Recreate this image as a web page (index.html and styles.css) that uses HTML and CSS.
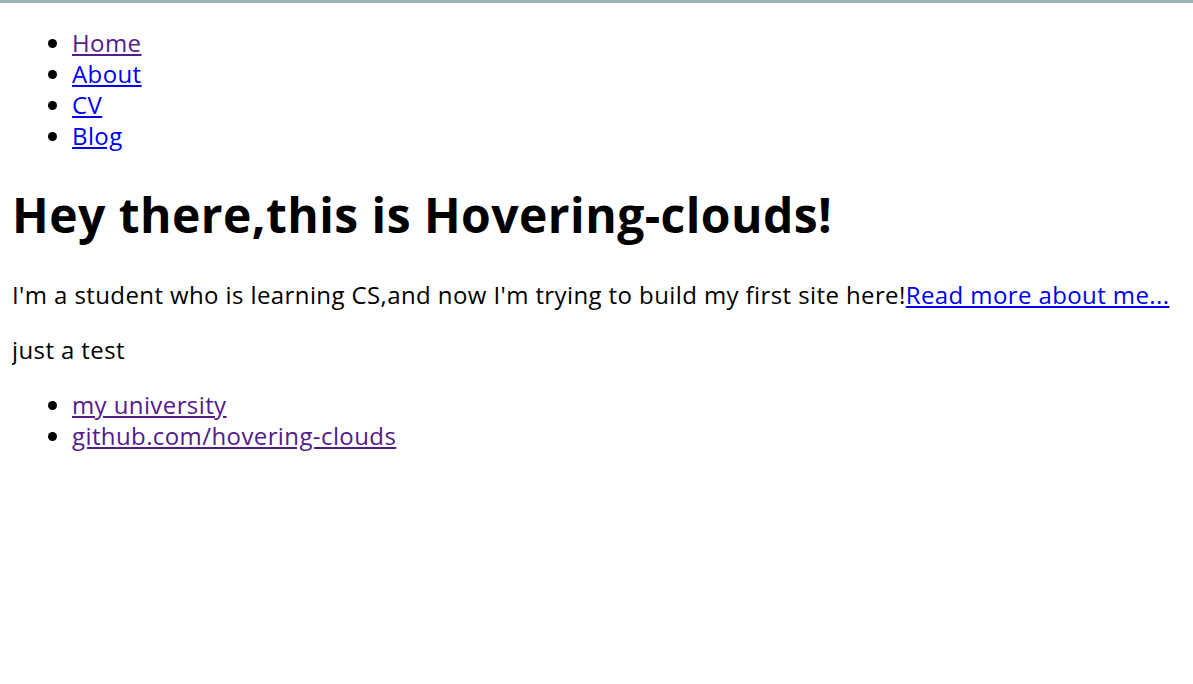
FILE: index.html
```html
<!DOCTYPE html>
<html lang="en">
<head>
<meta charset="utf-8">
<title>Hovering-clouds</title>
<link rel="stylesheet" href="styles.css">
</head>
<body class="page">
<ul class="nav">
  <li><a class="visited" href="#">Home</a></li>
  <li><a href="#">About</a></li>
  <li><a href="#">CV</a></li>
  <li><a href="#">Blog</a></li>
</ul>
<h1 class="title">Hey there,this is Hovering-clouds!</h1>
<p class="intro">I'm a student who is learning CS,and now I'm trying to build my first site here!<a href="#">Read more about me...</a></p>
<p class="intro">just a test</p>
<ul class="links">
  <li><a class="visited" href="#">my university</a></li>
  <li><a class="visited" href="#">github.com/hovering-clouds</a></li>
</ul>
</body>
</html>
```

FILE: styles.css
```css
html {
  border-top: 3px solid #9fb3bd;
  background: #ffffff;
}
.page {
  margin: 12px;
  font-family: "Open Sans", "Noto Sans", sans-serif;
  font-size: 24px;
  line-height: 31px;
  letter-spacing: 0.4px;
  color: #000000;
}
a {
  color: #0000ee;
  text-decoration: underline;
}
a.visited {
  color: #551a8b;
}
.nav {
  margin: 12px 0 24px;
  padding-left: 60px;
}
.links {
  margin: 24px 0;
  padding-left: 60px;
}
.title {
  font-size: 48px;
  line-height: 64px;
  letter-spacing: 0.45px;
  font-weight: bold;
  margin: 32px 0;
}
.intro {
  margin: 24px 0;
}
```
